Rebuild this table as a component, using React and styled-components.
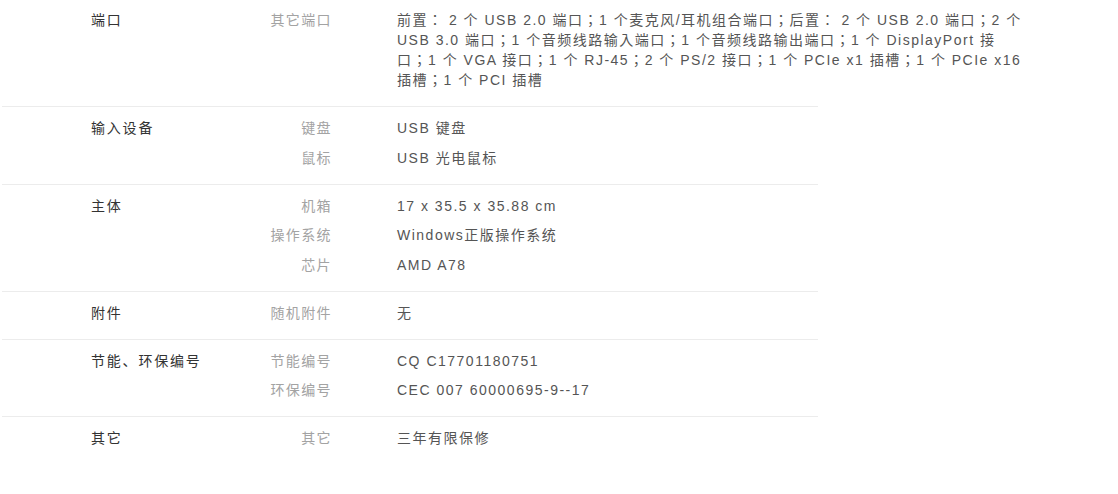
import React from "react";
import styled, { createGlobalStyle } from "styled-components";

const specs = [
  {
    group: "端口",
    items: [
      {
        label: "其它端口",
        value:
          "前置： 2 个 USB 2.0 端口；1 个麦克风/耳机组合端口；后置： 2 个 USB 2.0 端口；2 个 USB 3.0 端口；1 个音频线路输入端口；1 个音频线路输出端口；1 个 DisplayPort 接口；1 个 VGA 接口；1 个 RJ-45；2 个 PS/2 接口；1 个 PCIe x1 插槽；1 个 PCIe x16 插槽；1 个 PCI 插槽",
      },
    ],
  },
  {
    group: "输入设备",
    items: [
      { label: "键盘", value: "USB 键盘" },
      { label: "鼠标", value: "USB 光电鼠标" },
    ],
  },
  {
    group: "主体",
    items: [
      { label: "机箱", value: "17 x 35.5 x 35.88 cm" },
      { label: "操作系统", value: "Windows正版操作系统" },
      { label: "芯片", value: "AMD A78" },
    ],
  },
  {
    group: "附件",
    items: [{ label: "随机附件", value: "无" }],
  },
  {
    group: "节能、环保编号",
    items: [
      { label: "节能编号", value: "CQ C17701180751" },
      { label: "环保编号", value: "CEC 007 60000695-9--17" },
    ],
  },
  {
    group: "其它",
    items: [{ label: "其它", value: "三年有限保修" }],
  },
];

function App() {
  return (
    <Styles.Wrapper>
      <GlobalStyle />
      <Specs.List>
        {specs.map((section) => (
          <Specs.Row key={section.group}>
            <Specs.Group>{section.group}</Specs.Group>
            <Specs.Items>
              {section.items.map((item) => (
                <Specs.Item key={item.label}>
                  <Specs.Label>{item.label}</Specs.Label>
                  <Specs.Value>{item.value}</Specs.Value>
                </Specs.Item>
              ))}
            </Specs.Items>
          </Specs.Row>
        ))}
      </Specs.List>
    </Styles.Wrapper>
  );
}

const Styles = {
  Wrapper: styled.main`
    background: #fff;
    padding-left: 2px;
    min-height: 100vh;
  `,
};

const Specs = {
  List: styled.div`
    width: 816px;
  `,
  Row: styled.section`
    display: grid;
    grid-template-columns: 150px auto;
    padding: 11px 0 16px 89px;
    border-bottom: 1px solid #ececec;

    &:first-child {
      padding-top: 10px;
    }

    &:last-child {
      border-bottom: none;
    }
  `,
  Group: styled.div`
    color: #333;
    line-height: 20px;
    letter-spacing: 1.8px;
  `,
  Items: styled.dl`
    display: flex;
    flex-direction: column;
    gap: 9.5px;
    margin: 0;
  `,
  Item: styled.div`
    display: grid;
    grid-template-columns: 91px 625px;
    column-gap: 65px;
    line-height: 20px;
  `,
  Label: styled.dt`
    color: #a3a3a3;
    text-align: right;
    letter-spacing: 1.4px;
  `,
  Value: styled.dd`
    margin: 0;
    color: #555;
    letter-spacing: 1.5px;
    font-family: "Liberation Sans", Arial, "Noto Sans CJK TC", sans-serif;
  `,
};

const GlobalStyle = createGlobalStyle`
  *,
  *::before,
  *::after {
    box-sizing: border-box;
  }

  body {
    margin: 0;
    font-family: "Liberation Sans", Arial, "Noto Sans CJK SC", sans-serif;
    font-size: 14px;
  }
`;

export default App;
